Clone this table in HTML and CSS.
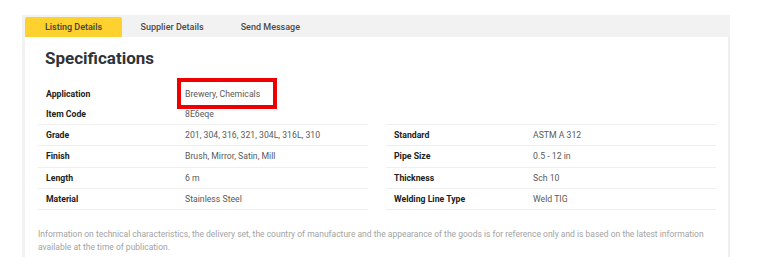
FILE: index.html
```html
<!DOCTYPE html>
<html>
<head>
<meta charset="utf-8">
<link rel="stylesheet" href="styles.css">
</head>
<body>
<div class="panel">
  <div class="tabs">
    <div class="tab active">Listing Details</div>
    <div class="tab">Supplier Details</div>
    <div class="tab">Send Message</div>
  </div>
  <div class="content">
    <h2 class="title">Specifications</h2>
    <div class="top-rows">
      <div class="row plain first"><span class="label">Application</span><span class="value"><span class="highlight">Brewery, Chemicals</span></span></div>
      <div class="row plain"><span class="label">Item Code</span><span class="value">8E6eqe</span></div>
    </div>
    <div class="tables">
      <div class="table">
        <div class="row"><span class="label">Grade</span><span class="value">201, 304, 316, 321, 304L, 316L, 310</span></div>
        <div class="row"><span class="label">Finish</span><span class="value">Brush, Mirror, Satin, Mill</span></div>
        <div class="row"><span class="label">Length</span><span class="value">6 m</span></div>
        <div class="row"><span class="label">Material</span><span class="value">Stainless Steel</span></div>
      </div>
      <div class="table">
        <div class="row"><span class="label">Standard</span><span class="value">ASTM A 312</span></div>
        <div class="row"><span class="label">Pipe Size</span><span class="value">0.5 - 12 in</span></div>
        <div class="row"><span class="label">Thickness</span><span class="value">Sch 10</span></div>
        <div class="row"><span class="label">Welding Line Type</span><span class="value">Weld TIG</span></div>
      </div>
    </div>
    <p class="note">Information on technical characteristics, the delivery set, the country of manufacture and the appearance of the goods is for reference only and is based on the latest information available at the time of publication.</p>
  </div>
</div>
</body>
</html>
```
FILE: styles.css
```css
* { box-sizing: border-box; }
html, body { margin: 0; padding: 0; background: #fff; }
body { font-family: Roboto, "Liberation Sans", sans-serif; color: #333; }

.panel {
  margin: 15px 0 0 22px;
  width: 708px;
  height: 242px;
  display: flex;
  flex-direction: column;
}

.tabs {
  display: flex;
  background: #f2f2f2;
  height: 22px;
  padding: 2px 0 0 3px;
}
.tab {
  height: 20px;
  line-height: 20px;
  padding: 0 18.5px;
  font-size: 9px;
  font-weight: 500;
  color: #4a4a4a;
}
.tab.active {
  background: #fdd22f;
  border-radius: 2px 2px 0 0;
  width: 97px;
  padding: 0;
  text-align: center;
  color: #3f3f3f;
}

.content {
  flex: 1;
  border-left: 3px solid #f2f2f2;
  border-right: 2px solid #efefef;
  padding: 0 12px 0 13px;
}

.title {
  margin: 9px 0 0 7px;
  font-size: 17px;
  font-weight: 700;
  color: #2e3338;
  line-height: 24px;
  height: 24px;
}

.top-rows {
  margin-top: 13px;
  width: 330px;
}

.tables {
  display: flex;
  gap: 18px;
}
.table {
  width: 330px;
  border-bottom: 1px solid #efefef;
}

.row {
  display: flex;
  align-items: center;
  height: 21.33px;
  padding-left: 8px;
  font-size: 8.7px;
  border-top: 1px solid #efefef;
}
.row.plain {
  border-top: none;
  height: 20px;
}
.row.plain.first {
  height: 21px;
  padding-top: 1px;
}
.label {
  width: 139px;
  flex: none;
  font-weight: 700;
  color: #222;
}
.value {
  color: #5a5a5a;
  position: relative;
}
.highlight {
  position: relative;
}
.highlight::after {
  content: "";
  position: absolute;
  left: -8px;
  right: -17px;
  top: -11px;
  bottom: -9.5px;
  border: 4.5px solid #ee0000;
}

.note {
  margin: 18px 0 0 0;
  width: 672px;
  font-size: 8.5px;
  line-height: 12.5px;
  color: #a3a3a3;
}
```
